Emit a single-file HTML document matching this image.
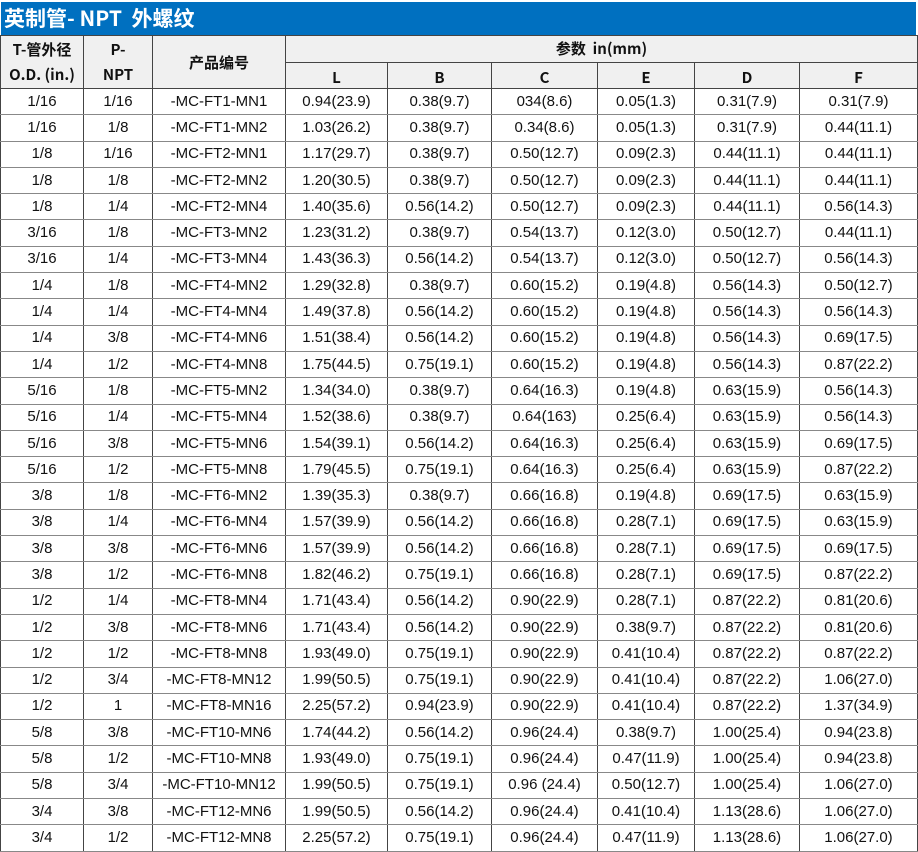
<!DOCTYPE html>
<html><head><meta charset="utf-8"><style>
html,body{margin:0;padding:0;background:#fff;width:918px;height:849px;overflow:hidden}
body{font-family:"Liberation Sans","Noto Sans CJK SC",sans-serif}
.title{position:absolute;left:1px;top:2px;width:915px;height:33px;background:#0070c0;color:#fff;font-weight:bold;font-size:21px;line-height:33px;padding-left:3px;box-sizing:border-box;font-family:"Noto Sans CJK SC","Liberation Sans",sans-serif}
table{position:absolute;left:0;top:35px;width:917px;border-collapse:collapse;table-layout:fixed;font-size:15px;color:#111}
td,th{border:1px solid #444;text-align:center;padding:0;white-space:nowrap;overflow:hidden;line-height:16px}
tbody td{border-top:1px solid #888;border-bottom:1px solid #888;height:26.3px;box-sizing:border-box}
th{background:#f0f0f0;font-weight:bold;font-size:15px;font-family:"Noto Sans CJK SC","Liberation Sans",sans-serif;height:26.5px;line-height:17px;box-sizing:border-box}
th.two{line-height:25px}
tr.h2 th{vertical-align:bottom;line-height:20px}
</style></head><body>
<div class="title">英制管- NPT&nbsp; 外螺纹</div>
<table>
<colgroup><col style="width:83px"><col style="width:69px"><col style="width:133px"><col style="width:102px"><col style="width:104px"><col style="width:106px"><col style="width:97px"><col style="width:105px"><col style="width:118px"></colgroup>
<thead>
<tr><th rowspan="2" class="two">T-管外径<br>O.D. (in.)</th><th rowspan="2" class="two">P-<br>NPT</th><th rowspan="2">产品编号</th><th colspan="6">参数&nbsp; in(mm)</th></tr>
<tr class="h2"><th>L</th><th>B</th><th>C</th><th>E</th><th>D</th><th>F</th></tr>
</thead>
<tbody>
<tr><td>1/16</td><td>1/16</td><td>-MC-FT1-MN1</td><td>0.94(23.9)</td><td>0.38(9.7)</td><td>034(8.6)</td><td>0.05(1.3)</td><td>0.31(7.9)</td><td>0.31(7.9)</td></tr>
<tr><td>1/16</td><td>1/8</td><td>-MC-FT1-MN2</td><td>1.03(26.2)</td><td>0.38(9.7)</td><td>0.34(8.6)</td><td>0.05(1.3)</td><td>0.31(7.9)</td><td>0.44(11.1)</td></tr>
<tr><td>1/8</td><td>1/16</td><td>-MC-FT2-MN1</td><td>1.17(29.7)</td><td>0.38(9.7)</td><td>0.50(12.7)</td><td>0.09(2.3)</td><td>0.44(11.1)</td><td>0.44(11.1)</td></tr>
<tr><td>1/8</td><td>1/8</td><td>-MC-FT2-MN2</td><td>1.20(30.5)</td><td>0.38(9.7)</td><td>0.50(12.7)</td><td>0.09(2.3)</td><td>0.44(11.1)</td><td>0.44(11.1)</td></tr>
<tr><td>1/8</td><td>1/4</td><td>-MC-FT2-MN4</td><td>1.40(35.6)</td><td>0.56(14.2)</td><td>0.50(12.7)</td><td>0.09(2.3)</td><td>0.44(11.1)</td><td>0.56(14.3)</td></tr>
<tr><td>3/16</td><td>1/8</td><td>-MC-FT3-MN2</td><td>1.23(31.2)</td><td>0.38(9.7)</td><td>0.54(13.7)</td><td>0.12(3.0)</td><td>0.50(12.7)</td><td>0.44(11.1)</td></tr>
<tr><td>3/16</td><td>1/4</td><td>-MC-FT3-MN4</td><td>1.43(36.3)</td><td>0.56(14.2)</td><td>0.54(13.7)</td><td>0.12(3.0)</td><td>0.50(12.7)</td><td>0.56(14.3)</td></tr>
<tr><td>1/4</td><td>1/8</td><td>-MC-FT4-MN2</td><td>1.29(32.8)</td><td>0.38(9.7)</td><td>0.60(15.2)</td><td>0.19(4.8)</td><td>0.56(14.3)</td><td>0.50(12.7)</td></tr>
<tr><td>1/4</td><td>1/4</td><td>-MC-FT4-MN4</td><td>1.49(37.8)</td><td>0.56(14.2)</td><td>0.60(15.2)</td><td>0.19(4.8)</td><td>0.56(14.3)</td><td>0.56(14.3)</td></tr>
<tr><td>1/4</td><td>3/8</td><td>-MC-FT4-MN6</td><td>1.51(38.4)</td><td>0.56(14.2)</td><td>0.60(15.2)</td><td>0.19(4.8)</td><td>0.56(14.3)</td><td>0.69(17.5)</td></tr>
<tr><td>1/4</td><td>1/2</td><td>-MC-FT4-MN8</td><td>1.75(44.5)</td><td>0.75(19.1)</td><td>0.60(15.2)</td><td>0.19(4.8)</td><td>0.56(14.3)</td><td>0.87(22.2)</td></tr>
<tr><td>5/16</td><td>1/8</td><td>-MC-FT5-MN2</td><td>1.34(34.0)</td><td>0.38(9.7)</td><td>0.64(16.3)</td><td>0.19(4.8)</td><td>0.63(15.9)</td><td>0.56(14.3)</td></tr>
<tr><td>5/16</td><td>1/4</td><td>-MC-FT5-MN4</td><td>1.52(38.6)</td><td>0.38(9.7)</td><td>0.64(163)</td><td>0.25(6.4)</td><td>0.63(15.9)</td><td>0.56(14.3)</td></tr>
<tr><td>5/16</td><td>3/8</td><td>-MC-FT5-MN6</td><td>1.54(39.1)</td><td>0.56(14.2)</td><td>0.64(16.3)</td><td>0.25(6.4)</td><td>0.63(15.9)</td><td>0.69(17.5)</td></tr>
<tr><td>5/16</td><td>1/2</td><td>-MC-FT5-MN8</td><td>1.79(45.5)</td><td>0.75(19.1)</td><td>0.64(16.3)</td><td>0.25(6.4)</td><td>0.63(15.9)</td><td>0.87(22.2)</td></tr>
<tr><td>3/8</td><td>1/8</td><td>-MC-FT6-MN2</td><td>1.39(35.3)</td><td>0.38(9.7)</td><td>0.66(16.8)</td><td>0.19(4.8)</td><td>0.69(17.5)</td><td>0.63(15.9)</td></tr>
<tr><td>3/8</td><td>1/4</td><td>-MC-FT6-MN4</td><td>1.57(39.9)</td><td>0.56(14.2)</td><td>0.66(16.8)</td><td>0.28(7.1)</td><td>0.69(17.5)</td><td>0.63(15.9)</td></tr>
<tr><td>3/8</td><td>3/8</td><td>-MC-FT6-MN6</td><td>1.57(39.9)</td><td>0.56(14.2)</td><td>0.66(16.8)</td><td>0.28(7.1)</td><td>0.69(17.5)</td><td>0.69(17.5)</td></tr>
<tr><td>3/8</td><td>1/2</td><td>-MC-FT6-MN8</td><td>1.82(46.2)</td><td>0.75(19.1)</td><td>0.66(16.8)</td><td>0.28(7.1)</td><td>0.69(17.5)</td><td>0.87(22.2)</td></tr>
<tr><td>1/2</td><td>1/4</td><td>-MC-FT8-MN4</td><td>1.71(43.4)</td><td>0.56(14.2)</td><td>0.90(22.9)</td><td>0.28(7.1)</td><td>0.87(22.2)</td><td>0.81(20.6)</td></tr>
<tr><td>1/2</td><td>3/8</td><td>-MC-FT8-MN6</td><td>1.71(43.4)</td><td>0.56(14.2)</td><td>0.90(22.9)</td><td>0.38(9.7)</td><td>0.87(22.2)</td><td>0.81(20.6)</td></tr>
<tr><td>1/2</td><td>1/2</td><td>-MC-FT8-MN8</td><td>1.93(49.0)</td><td>0.75(19.1)</td><td>0.90(22.9)</td><td>0.41(10.4)</td><td>0.87(22.2)</td><td>0.87(22.2)</td></tr>
<tr><td>1/2</td><td>3/4</td><td>-MC-FT8-MN12</td><td>1.99(50.5)</td><td>0.75(19.1)</td><td>0.90(22.9)</td><td>0.41(10.4)</td><td>0.87(22.2)</td><td>1.06(27.0)</td></tr>
<tr><td>1/2</td><td>1</td><td>-MC-FT8-MN16</td><td>2.25(57.2)</td><td>0.94(23.9)</td><td>0.90(22.9)</td><td>0.41(10.4)</td><td>0.87(22.2)</td><td>1.37(34.9)</td></tr>
<tr><td>5/8</td><td>3/8</td><td>-MC-FT10-MN6</td><td>1.74(44.2)</td><td>0.56(14.2)</td><td>0.96(24.4)</td><td>0.38(9.7)</td><td>1.00(25.4)</td><td>0.94(23.8)</td></tr>
<tr><td>5/8</td><td>1/2</td><td>-MC-FT10-MN8</td><td>1.93(49.0)</td><td>0.75(19.1)</td><td>0.96(24.4)</td><td>0.47(11.9)</td><td>1.00(25.4)</td><td>0.94(23.8)</td></tr>
<tr><td>5/8</td><td>3/4</td><td>-MC-FT10-MN12</td><td>1.99(50.5)</td><td>0.75(19.1)</td><td>0.96&nbsp;(24.4)</td><td>0.50(12.7)</td><td>1.00(25.4)</td><td>1.06(27.0)</td></tr>
<tr><td>3/4</td><td>3/8</td><td>-MC-FT12-MN6</td><td>1.99(50.5)</td><td>0.56(14.2)</td><td>0.96(24.4)</td><td>0.41(10.4)</td><td>1.13(28.6)</td><td>1.06(27.0)</td></tr>
<tr><td>3/4</td><td>1/2</td><td>-MC-FT12-MN8</td><td>2.25(57.2)</td><td>0.75(19.1)</td><td>0.96(24.4)</td><td>0.47(11.9)</td><td>1.13(28.6)</td><td>1.06(27.0)</td></tr>
</tbody>
</table>
</body></html>
